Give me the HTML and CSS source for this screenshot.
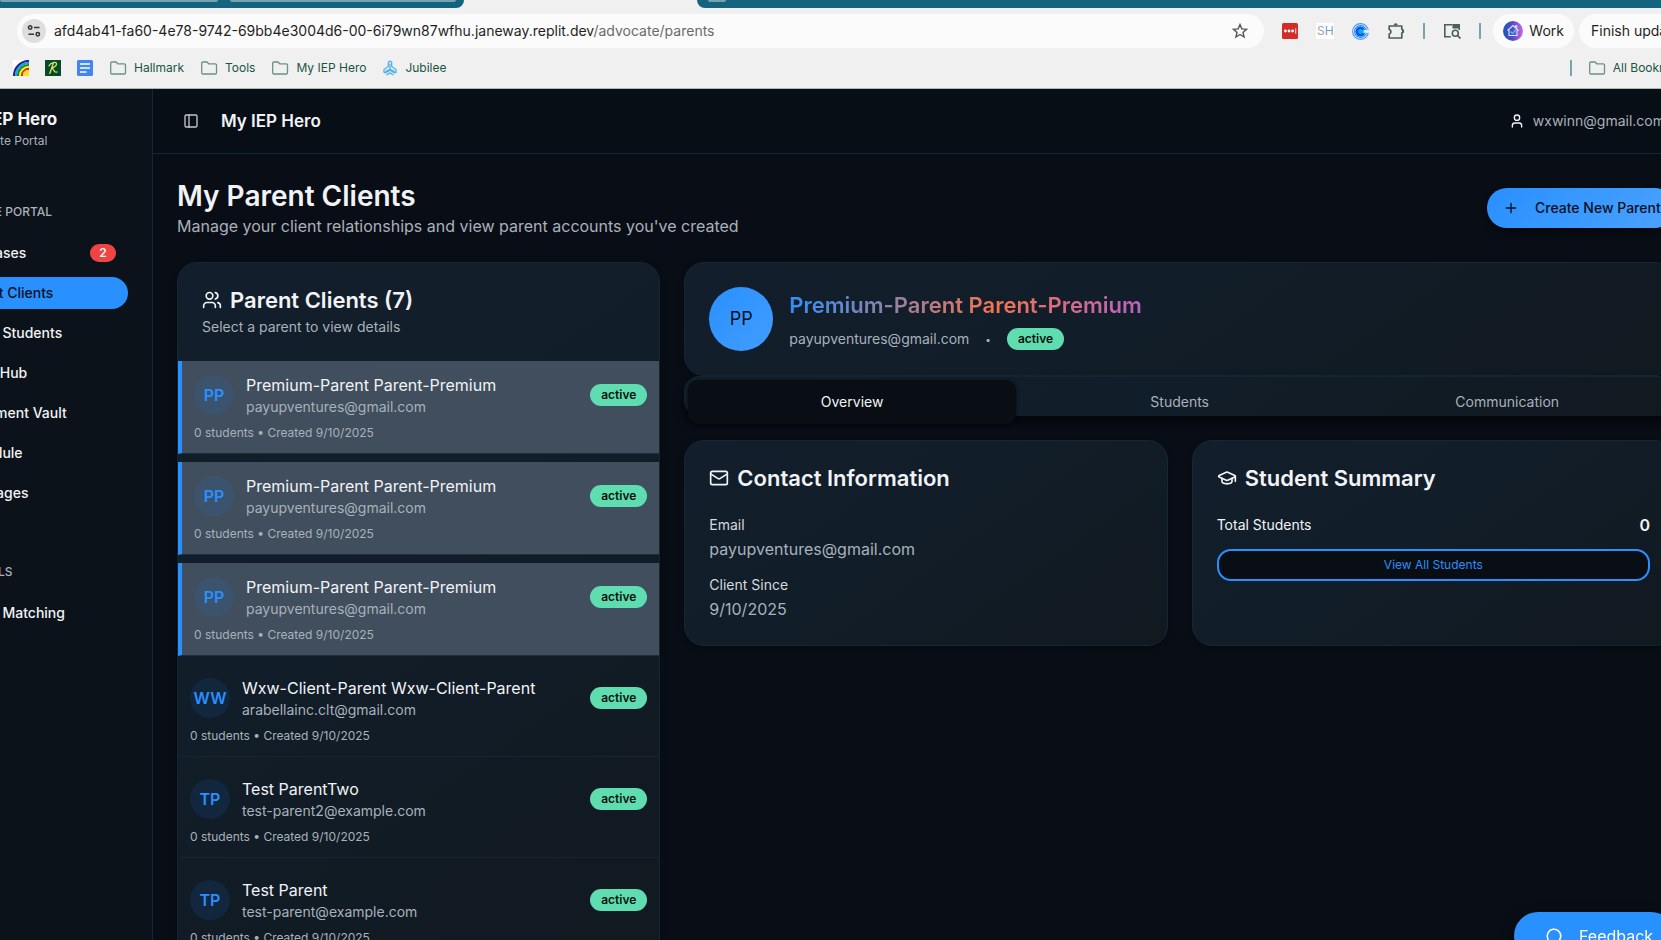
FILE: index.html
```html
<!DOCTYPE html>
<html lang="en">
<head>
<meta charset="utf-8">
<title>My IEP Hero</title>
<link rel="stylesheet" href="styles.css">
</head>
<body>
<svg class="defs" aria-hidden="true">
  <symbol id="folder" viewBox="0 0 18 16"><path d="M1.7 3.2v9.600a1.200 1.200 0 0 0 1.200 1.200h12.400a1.200 1.200 0 0 0 1.200-1.200V5a1.200 1.200 0 0 0-1.200-1.200H8.700L7 2H2.900A1.200 1.200 0 0 0 1.700 3.200z" fill="none" stroke="currentColor" stroke-width="1.300"/></symbol>
</svg>

<div class="browser">
  <div class="tabstrip">
    <div class="strip strip-left"><i class="pill pill-a"></i><i class="pill pill-b"></i></div>
    <div class="strip strip-right"><i class="pill pill-c"></i></div>
  </div>
  <div class="toolbar">
    <div class="urlbar">
      <button class="site-info" aria-label="Site information"><svg width="14" height="14" viewBox="0 0 14 14" fill="none" stroke="#333" stroke-width="1.500"><circle cx="3.200" cy="3.500" r="1.700"/><path d="M7 3.500h5.500M1.500 10.300H7"/><circle cx="10.800" cy="10.300" r="1.700"/></svg></button>
      <span class="url">afd4ab41-fa60-4e78-9742-69bb4e3004d6-00-6i79wn87wfhu.janeway.replit.dev<span class="path">/advocate/parents</span></span>
      <button class="icon-btn star" aria-label="Bookmark this page"><svg width="16" height="16" viewBox="0 0 16 16" fill="none" stroke="#555" stroke-width="1.400"><path d="M8 1.600l1.900 4.300 4.700.4-3.600 3.100 1.100 4.600L8 11.500 3.900 14 5 9.400 1.400 6.300l4.700-.4z"/></svg></button>
    </div>
    <div class="extensions">
      <svg width="16" height="16" viewBox="0 0 16 16"><rect width="16" height="16" rx="1.500" fill="#d32d27"/><g fill="#fff"><circle cx="3.400" cy="8" r="1.400"/><circle cx="7" cy="8" r="1.400"/><circle cx="10.600" cy="8" r="1.400"/><path d="M13.300 5.300h.9v5.400h-.9z"/></g></svg>
      <span class="ext-sh"><span class="sh-s">S</span>H</span>
      <svg width="17" height="17" viewBox="0 0 16 16" fill="none"><circle cx="8" cy="8" r="7.400" stroke="#4a98f7" stroke-width="1.100"/><circle cx="8" cy="8" r="5.600" fill="#fff" stroke="#1f7df5" stroke-width="1"/><circle cx="8" cy="8" r="4.900" fill="#10a8f5"/><path d="M10.600 5.800A3.400 3.400 0 1 0 10.600 10.200" stroke="#0a55e8" stroke-width="2.200"/><path d="M11 6.800h5v2.400h-5z" fill="#e6f2fd"/></svg>
      <svg width="18" height="18" viewBox="0 0 18 18"><path d="M2.200 4h12.600v3.200a2 2 0 0 1 0 3.800v5H2.200v-4a2.400 2.400 0 0 0 0-4.600z" fill="none" stroke="#4b6056" stroke-width="1.700" stroke-linejoin="round"/><path d="M6.700 3.300a2 2 0 0 1 4 0zM15.200 7.200a2 2 0 0 1 0 4z" fill="#4b6056"/></svg>
      <i class="bar"></i>
      <svg width="18" height="16" viewBox="0 0 18 16" fill="none" stroke="#4b6056" stroke-width="1.600"><path d="M9.500 1.800H1.800v12h6"/><path d="M9.500 1h7.500v4.500H9.500z" fill="#4b6056" stroke="none"/><path d="M16.200 3v4" /><circle cx="12.300" cy="10.300" r="3"/><path d="M14.500 12.500l3 3"/></svg>
      <i class="bar"></i>
    </div>
    <button class="chip profile"><svg width="20" height="20" viewBox="0 0 20 20"><defs><linearGradient id="pg"><stop offset=".1" stop-color="#2353bd"/><stop offset=".5" stop-color="#5a4cc5"/><stop offset="1" stop-color="#cc6be0"/></linearGradient></defs><circle cx="10" cy="10" r="10" fill="url(#pg)"/><path d="M4.500 9.500L10 4.500l5.500 5M6 9v5.500h8V9M12.500 6V4.800h1.300v2.500" fill="none" stroke="#e4e2fa" stroke-width="1.100"/><path d="M7.500 10.500l2 2 3.500-4" fill="none" stroke="#25c9f7" stroke-width="1.500"/></svg>Work</button>
    <button class="chip update">Finish update</button>
  </div>
  <nav class="bookmarks" aria-label="Bookmarks">
    <a href="#" aria-label="Rainbow"><svg width="16" height="16" viewBox="0 0 16 16" fill="none"><path d="M0 0h16v16H0z" fill="#fff"/><path d="M1 16A15 15 0 0 1 16 1" stroke="#25209a" stroke-width="2.200"/><path d="M3 16A13 13 0 0 1 16 3" stroke="#14a3df" stroke-width="2"/><path d="M5 16A11 11 0 0 1 16 5" stroke="#138b31" stroke-width="2.200"/><path d="M7 16a9 9 0 0 1 9-9" stroke="#f8ee12" stroke-width="2.200"/><path d="M9 16a7 7 0 0 1 7-7" stroke="#ee2417" stroke-width="2.400"/><path d="M10 16v-3l3-3h3v6z" fill="#f5e32a"/></svg></a>
    <a href="#" aria-label="R"><svg width="16" height="16" viewBox="0 0 16 16" fill="none"><path d="M0 0h16v16H0z" fill="#064a27"/><path d="M4 5.800C5.500 2.500 12 1 11.500 4.300 11 7 7 8 6.500 8c3 0 1.500 5.500 5.500 4M8.300 3.300L4.800 13.500" stroke="#d5e36a" stroke-width="1.300" stroke-linecap="round"/></svg></a>
    <a href="#" aria-label="Docs"><svg width="16" height="16" viewBox="0 0 16 16"><rect width="16" height="16" rx="1.500" fill="#4384f3"/><path d="M3 4h10M3 8h10M3 12h6.500" stroke="#fff" stroke-width="1.600"/></svg></a>
    <a href="#"><svg class="folder" width="18" height="16"><use href="#folder"/></svg>Hallmark</a>
    <a href="#"><svg class="folder" width="18" height="16"><use href="#folder"/></svg>Tools</a>
    <a href="#"><svg class="folder" width="18" height="16"><use href="#folder"/></svg>My IEP Hero</a>
    <a href="#"><svg width="16" height="16" viewBox="0 0 16 16" fill="none" stroke="#50b1e6" stroke-width="1.300" stroke-linejoin="round" stroke-linecap="round"><path d="M6.300 6.500V2.200L8 1l1.700 1.200v4.300M8 4v5.300M6.300 6.500L2 9.500v2.800l1.600.7L8 10.300l4.400 2.700 1.600-.7V9.500L9.700 6.500M8 9.300l-4.300 2M8 9.300l4.300 2M5 14.800l3-1.900 3 1.900"/></svg>Jubilee</a>
    <span class="all-bookmarks"><i class="bar"></i><a href="#"><svg class="folder" width="18" height="16"><use href="#folder"/></svg>All Bookmarks</a></span>
  </nav>
</div>

<div class="app">
  <aside class="sidebar">
    <div class="brand"><strong>My IEP Hero</strong><span>Advocate Portal</span></div>
    <h2 class="group">ADVOCATE PORTAL</h2>
    <nav class="nav">
      <a href="#">My Cases<span class="count">2</span></a>
      <a href="#" class="current">Parent Clients</a>
      <a href="#">Client Students</a>
      <a href="#">Tools Hub</a>
      <a href="#">Document Vault</a>
      <a href="#">Schedule</a>
      <a href="#">Messages</a>
    </nav>
    <h2 class="group second">CASE TOOLS</h2>
    <nav class="nav"><a href="#">Client Matching</a></nav>
  </aside>

  <div class="content">
    <header class="topbar">
      <button class="icon-btn" aria-label="Toggle sidebar"><svg class="line" width="16" height="16" viewBox="0 0 24 24"><rect width="18" height="18" x="3" y="3" rx="2"/><path d="M9 3v18"/></svg></button>
      <h2>My IEP Hero</h2>
      <div class="account"><svg class="line" width="16" height="16" viewBox="0 0 24 24"><path d="M19 21v-2a4 4 0 0 0-4-4H9a4 4 0 0 0-4 4v2"/><circle cx="12" cy="7" r="4"/></svg><span>wxwinn@gmail.com</span></div>
    </header>

    <main>
      <div class="page-head">
        <div><h1>My Parent Clients</h1><p>Manage your client relationships and view parent accounts you've created</p></div>
        <button class="create"><svg class="line" width="16" height="16" viewBox="0 0 24 24"><path d="M5 12h14M12 5v14"/></svg>Create New Parent</button>
      </div>

      <div class="columns">
        <section class="card list-card">
          <div class="card-head">
            <h3><svg class="line" width="20" height="20" viewBox="0 0 24 24"><path d="M16 21v-2a4 4 0 0 0-4-4H6a4 4 0 0 0-4 4v2"/><circle cx="9" cy="7" r="4"/><path d="M22 21v-2a4 4 0 0 0-3-3.870M16 3.130a4 4 0 0 1 0 7.750"/></svg>Parent Clients (7)</h3>
            <p>Select a parent to view details</p>
          </div>
          <ul class="clients">
            <li class="selected"><div class="row"><span class="avatar">PP</span><div class="who"><b>Premium-Parent Parent-Premium</b><span>payupventures@gmail.com</span></div><span class="badge">active</span></div><p>0 students • Created 9/10/2025</p></li>
            <li class="selected"><div class="row"><span class="avatar">PP</span><div class="who"><b>Premium-Parent Parent-Premium</b><span>payupventures@gmail.com</span></div><span class="badge">active</span></div><p>0 students • Created 9/10/2025</p></li>
            <li class="selected"><div class="row"><span class="avatar">PP</span><div class="who"><b>Premium-Parent Parent-Premium</b><span>payupventures@gmail.com</span></div><span class="badge">active</span></div><p>0 students • Created 9/10/2025</p></li>
            <li><div class="row"><span class="avatar">WW</span><div class="who"><b>Wxw-Client-Parent Wxw-Client-Parent</b><span>arabellainc.clt@gmail.com</span></div><span class="badge">active</span></div><p>0 students • Created 9/10/2025</p></li>
            <li><div class="row"><span class="avatar">TP</span><div class="who"><b>Test ParentTwo</b><span>test-parent2@example.com</span></div><span class="badge">active</span></div><p>0 students • Created 9/10/2025</p></li>
            <li><div class="row"><span class="avatar">TP</span><div class="who"><b>Test Parent</b><span>test-parent@example.com</span></div><span class="badge">active</span></div><p>0 students • Created 9/10/2025</p></li>
          </ul>
        </section>

        <div class="detail">
          <section class="card profile-card">
            <span class="avatar large">PP</span>
            <div class="profile-text">
              <h2>Premium-Parent Parent-Premium</h2>
              <div class="profile-meta"><span>payupventures@gmail.com</span><span class="dot">•</span><span class="badge">active</span></div>
            </div>
          </section>
          <div class="tabs" role="tablist">
            <button role="tab" aria-selected="true">Overview</button>
            <button role="tab" aria-selected="false">Students</button>
            <button role="tab" aria-selected="false">Communication</button>
          </div>
          <div class="panels">
            <section class="card panel">
              <h3><svg class="line" width="20" height="20" viewBox="0 0 24 24"><rect width="20" height="16" x="2" y="4" rx="2"/><path d="m22 7-8.970 5.700a1.940 1.940 0 0 1-2.060 0L2 7"/></svg>Contact Information</h3>
              <dl>
                <div><dt>Email</dt><dd>payupventures@gmail.com</dd></div>
                <div><dt>Client Since</dt><dd>9/10/2025</dd></div>
              </dl>
            </section>
            <section class="card panel">
              <h3><svg class="line" width="20" height="20" viewBox="0 0 24 24"><path d="M21.420 10.922a1 1 0 0 0-.019-1.838L12.830 5.180a2 2 0 0 0-1.660 0L2.600 9.080a1 1 0 0 0 0 1.832l8.570 3.908a2 2 0 0 0 1.660 0z"/><path d="M22 10v6M6 12.500V16a6 3 0 0 0 12 0v-3.500"/></svg>Student Summary</h3>
              <div class="total"><span>Total Students</span><b>0</b></div>
              <button class="outline">View All Students</button>
            </section>
          </div>
        </div>
      </div>
    </main>
  </div>
</div>
<button class="feedback"><svg class="line" width="18" height="18" viewBox="0 0 24 24"><path d="M7.900 20A9 9 0 1 0 4 16.100L2 22Z"/></svg>Feedback</button>
</body>
</html>
```
FILE: styles.css
```css
* { box-sizing: border-box; margin: 0; padding: 0; }
:root {
  --blue: #2990ff;
  --bg: #090d15;
  --line: #152635;
  --text: #f1f3f6;
  --muted: #a9b1bb;
  --card: linear-gradient(145deg, #121e2b 0%, #111d28 45%, #111920 100%);
}
html, body { height: 100%; overflow: hidden; }
body { display: flex; flex-direction: column; background: var(--bg); color: var(--text); font-family: Inter, "Liberation Sans", sans-serif; font-size: 14px; line-height: 20px; }
button { font: inherit; color: inherit; border: 0; background: none; }
a { color: inherit; text-decoration: none; }
svg { flex: none; display: block; }
ul { list-style: none; }
.defs { position: absolute; width: 0; height: 0; }
.line { fill: none; stroke: currentColor; stroke-width: 2; stroke-linecap: round; stroke-linejoin: round; }

/* Browser chrome */
.browser { flex: none; background: #f0f0f0; color: #1f1f1f; border-bottom: 1px solid #b4b6b4; overflow: hidden; }
.tabstrip { display: flex; height: 8px; }
.strip { display: flex; background: #14637f; }
.strip-left { flex: 0 0 464px; gap: 12px; border-radius: 0 0 10px 0; }
.strip-right { flex: 1; margin-left: 233px; padding-left: 11px; border-radius: 0 0 0 10px; }
.pill { height: 2px; background: #76a1b0; border-radius: 0 0 8px 8px; }
.pill-a { width: 218px; }
.pill-b { width: 226px; }
.pill-c { width: 18px; }
.toolbar { display: flex; align-items: center; padding: 6px 0 0 17px; margin-right: -38px; }
.urlbar { flex: 1; display: flex; align-items: center; gap: 8px; height: 34px; padding: 0 16px 0 5px; border-radius: 17px; background: #fbfbfb; }
.site-info { display: grid; place-items: center; width: 24px; height: 24px; border-radius: 50%; background: #dedede; }
.url { flex: 1; white-space: nowrap; }
.path { color: #6a6a6a; }
.extensions { display: flex; align-items: center; gap: 18px; padding: 0 12px 0 18px; }
.ext-sh { width: 18px; height: 16px; background: #fff; color: #6f9fcb; font-size: 12px; line-height: 16px; text-align: center; }
.sh-s { color: #9aa2aa; }
.bar { flex: none; width: 2px; height: 16px; background: #78a3b2; }
.chip { display: flex; align-items: center; gap: 6px; height: 34px; border-radius: 17px; background: #fbfbfb; padding: 0 12px 0 10px; white-space: nowrap; }
.profile { padding-right: 10px; }
.update { width: 120px; margin-left: 5px; padding-left: 12px; overflow: hidden; }
.bookmarks { display: flex; align-items: center; gap: 16px; height: 40px; padding: 0 5px 0 13px; margin-right: -38px; color: #1a5543; font-size: 12px; }
.bookmarks a { display: flex; align-items: center; gap: 7px; white-space: nowrap; }
.folder { color: #6b9183; }
.all-bookmarks { display: flex; align-items: center; gap: 16px; margin-left: auto; }

/* App shell */
.app { flex: 1; min-height: 0; display: flex; margin: 0 -38px 0 -103px; }
.sidebar { flex: 0 0 256px; padding: 17px 24px 0 36px; background: #0b1219; border-right: 1px solid var(--line); }
.brand { display: flex; flex-direction: column; gap: 1px; padding-left: 24px; height: 94px; }
.brand strong { font-size: 17px; line-height: 26px; font-weight: 700; }
.brand span { font-size: 12px; line-height: 16px; color: var(--muted); }
.group { padding-left: 4px; margin-bottom: 13px; font-size: 12px; line-height: 24px; font-weight: 500; color: var(--muted); }
.second { margin-top: 51px; }
.nav { display: flex; flex-direction: column; gap: 8px; }
.nav a { display: flex; align-items: center; height: 32px; padding: 0 12px 0 27px; border-radius: 16px; font-weight: 500; white-space: nowrap; }
.nav .current { background: var(--blue); color: #08111d; }
.count { margin-left: auto; width: 26px; height: 18px; border-radius: 9px; background: #ef4444; font-size: 12px; line-height: 18px; text-align: center; font-weight: 600; }
.content { flex: 1; min-width: 0; display: flex; flex-direction: column; }
.topbar { flex: none; display: flex; align-items: center; height: 65px; padding: 0 34px 0 30px; background: #080e15; border-bottom: 1px solid var(--line); }
.topbar h2 { margin-left: 22px; font-size: 17px; line-height: 28px; font-weight: 600; }
.topbar .icon-btn { color: #c3c8cd; }
.account { display: flex; align-items: center; gap: 8px; margin-left: auto; }
.account span { color: var(--muted); }
main { flex: 1; min-height: 0; padding: 24px; }

.page-head { display: flex; align-items: center; justify-content: space-between; margin-bottom: 24px; }
h1 { font-size: 28px; line-height: 36px; font-weight: 600; }
.page-head p { font-size: 16px; line-height: 24px; color: var(--muted); }
.create { display: flex; align-items: center; gap: 16px; height: 40px; width: 188px; padding: 0 16px; border-radius: 20px; background: linear-gradient(135deg, #2990ff, #4aa2ff); color: #08111d; font-weight: 500; white-space: nowrap; box-shadow: 0 4px 6px #0006; }

.columns { display: grid; grid-template-columns: repeat(3, 1fr); gap: 24px; align-items: start; }
.card { border: 1px solid var(--line); border-radius: 20px; background: var(--card); box-shadow: 0 2px 6px #0005; }
.list-card { border-radius: 20px 20px 0 0; }
.detail { grid-column: span 2; min-width: 0; }
.card-head { padding: 24px; }
h3 { display: flex; align-items: center; gap: 8px; font-size: 22px; line-height: 26px; font-weight: 600; white-space: nowrap; }
.card-head p { margin-top: 4px; color: var(--muted); }
.clients { display: flex; flex-direction: column; gap: 8px; }
.clients li { padding: 12px; border-bottom: 1px solid #162432; }
.clients .selected { background: #404e5d; border-left: 4px solid var(--blue); border-bottom-color: #1c2e40; }
.row { display: flex; align-items: center; gap: 12px; }
.avatar { flex: none; display: grid; place-items: center; width: 40px; height: 40px; border-radius: 50%; background: #12263d; color: var(--blue); font-size: 16px; font-weight: 600; }
.selected .avatar { background: #3b536d; }
.who { flex: 1; min-width: 0; display: flex; flex-direction: column; }
.who b { font-size: 16px; line-height: 24px; font-weight: 400; white-space: nowrap; }
.who span { color: var(--muted); }
.clients p { margin-top: 8px; font-size: 12px; line-height: 16px; color: var(--muted); }
.badge { padding: 3px 11px; border-radius: 11px; background: #60ddb0; color: #07120f; font-size: 12px; line-height: 16px; font-weight: 600; }

.profile-card { display: flex; align-items: center; gap: 16px; padding: 24px; }
.avatar.large { width: 64px; height: 64px; background: linear-gradient(135deg, #2990ff, #429dff); color: #08111d; font-size: 18px; font-weight: 400; }
.profile-text h2 { width: fit-content; font-size: 22px; line-height: 34px; font-weight: 600; color: transparent; background: linear-gradient(110deg, #2990ff 0%, #f57350 58%, #b463c8 100%); background-clip: text; -webkit-background-clip: text; }
.profile-meta { display: flex; align-items: center; gap: 16px; margin-top: 6px; color: var(--muted); }
.dot { font-size: 10px; }
.tabs { display: grid; grid-template-columns: repeat(3, 1fr); height: 40px; padding: 4px; border-radius: 16px 16px 0 16px; background: linear-gradient(145deg, #121e2b, #111d28 50%, #111920); box-shadow: inset 1px 1px 0 #142430, 0 6px 10px #0009; }
.tabs button { height: 44px; border-radius: 10px; font-weight: 400; color: var(--muted); }
.tabs [aria-selected="true"] { background: #090d14; color: var(--text); box-shadow: 0 1px 4px #0008; }
.panels { display: grid; grid-template-columns: repeat(2, 1fr); gap: 24px; margin-top: 24px; }
.panel { padding: 24px; }
.panel h3 { margin-bottom: 22px; }
dl { display: grid; gap: 12px; line-height: 24px; }
dt { color: #d6d9de; }
dd { font-size: 16px; color: var(--muted); }
.total { display: flex; justify-content: space-between; line-height: 24px; }
.total b { font-size: 16px; font-weight: 600; }
.outline { display: block; width: 100%; height: 32px; margin-top: 12px; border: 2px solid var(--blue); border-radius: 14px; background: #090d14; color: var(--blue); font-size: 12px; line-height: 16px; }

.feedback { position: fixed; right: -14px; bottom: -20px; display: flex; align-items: center; gap: 16px; height: 48px; width: 161px; padding: 0 0 0 31px; border-radius: 24px; background: var(--blue); color: #fff; font-size: 16px; font-weight: 400; box-shadow: 0 4px 12px #0008; }
```
